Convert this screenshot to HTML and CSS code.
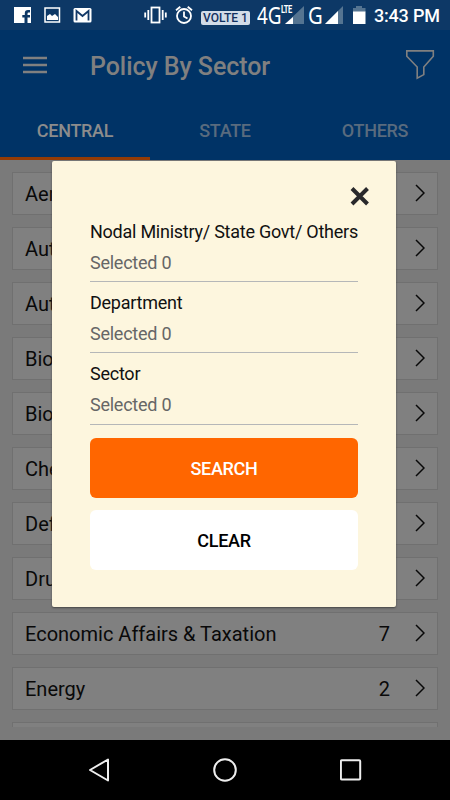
FILE: index.html
```html
<!DOCTYPE html>
<html lang="en">
<head>
<meta charset="utf-8">
<title>Policy By Sector</title>
<link rel="stylesheet" href="styles.css">
</head>
<body>
<div class="screen">
  <header class="status">
    <svg class="notices" width="80" height="30" viewBox="0 0 80 30">
      <path fill="#fff" fill-rule="evenodd" d="M1 7h17v16h-3.500v-5.500h2.500v-2.500h-2.500v-1.300q0-1.200 1.200-1.200h1.300V10h-2q-3.200 0-3.200 3.200V15H9.300v2.500h2.200V23H1z"/>
      <path fill="none" stroke="#fff" stroke-width="1.500" d="M32 8h14.500v14H32z"/>
      <path fill="#fff" d="M34 20v-4l3-2 2 2 3-2 3 3v3z"/>
      <rect x="60.500" y="8" width="18" height="14.500" rx="1.500" fill="#fff"/>
      <path fill="none" stroke="#123968" stroke-width="1.800" d="M63.500 20.500v-9.500l6 5 6-5v9.500"/>
    </svg>
    <svg class="alerts" width="50" height="30" viewBox="0 0 50 30">
      <g fill="none" stroke="#fff" stroke-width="1.800">
        <rect x="7.500" y="7.500" width="8" height="15"/>
        <path d="M4.300 10v10M1.200 12.500v5M18.700 10v10M21.800 12.500v5"/>
        <circle cx="40" cy="16" r="7"/>
        <path d="M40 11.500v5l3.500 2M32 10.300l4.300-3.600M48 10.300l-4.300-3.600"/>
      </g>
    </svg>
    <span class="volte">VOLTE 1</span>
    <span class="net">4G</span>
    <span class="lte">LTE</span>
    <svg class="signal-one" width="19" height="30" viewBox="0 0 19 30"><path fill="#557491" d="M0 24L19 6v18z"/><path fill="#fff" d="M0 24l8-7v7z"/></svg>
    <span class="net edge">G</span>
    <svg class="signal-two" width="18" height="30" viewBox="0 0 18 30"><path fill="#557491" d="M0 24L18 6v18z"/><path fill="#fff" d="M0 24L13 11v13z"/></svg>
    <svg class="battery" width="13" height="30" viewBox="0 0 13 30"><path fill="#557491" d="M0 8h3V6h6v2h3.500v4H0z"/><path fill="#fff" d="M0 11.500h12.500V24H0z"/></svg>
    <span class="clock">3:43 PM</span>
  </header>
  <div class="appbar">
    <svg width="24" height="18" viewBox="0 0 24 18"><path stroke="#808080" stroke-width="2.400" d="M0 2h24M0 9h24M0 16h24"/></svg>
    <h1>Policy By Sector</h1>
    <svg class="filter" width="30" height="32" viewBox="0 0 30 32"><path fill="none" stroke="#808080" stroke-width="1.600" d="M1.800 1.900h26.500v5.400L18.800 18v7.600l-6.600 3.600V18L1.800 7.300z"/></svg>
  </div>
  <nav class="tabs"><span class="active">CENTRAL</span><span>STATE</span><span>OTHERS</span></nav>
  <main class="list">
    <div class="row"><b>Aer</b><i></i><svg width="10" height="18" viewBox="0 0 10 18"><path d="M1 1l8 8-8 8"/></svg></div>
    <div class="row"><b>Aut</b><i></i><svg width="10" height="18" viewBox="0 0 10 18"><path d="M1 1l8 8-8 8"/></svg></div>
    <div class="row"><b>Aut</b><i></i><svg width="10" height="18" viewBox="0 0 10 18"><path d="M1 1l8 8-8 8"/></svg></div>
    <div class="row"><b>Bio</b><i></i><svg width="10" height="18" viewBox="0 0 10 18"><path d="M1 1l8 8-8 8"/></svg></div>
    <div class="row"><b>Bio</b><i></i><svg width="10" height="18" viewBox="0 0 10 18"><path d="M1 1l8 8-8 8"/></svg></div>
    <div class="row"><b>Che</b><i></i><svg width="10" height="18" viewBox="0 0 10 18"><path d="M1 1l8 8-8 8"/></svg></div>
    <div class="row"><b>Def</b><i></i><svg width="10" height="18" viewBox="0 0 10 18"><path d="M1 1l8 8-8 8"/></svg></div>
    <div class="row"><b>Dru</b><i></i><svg width="10" height="18" viewBox="0 0 10 18"><path d="M1 1l8 8-8 8"/></svg></div>
    <div class="row"><b>Economic Affairs &amp; Taxation</b><i>7</i><svg width="10" height="18" viewBox="0 0 10 18"><path d="M1 1l8 8-8 8"/></svg></div>
    <div class="row"><b>Energy</b><i>2</i><svg width="10" height="18" viewBox="0 0 10 18"><path d="M1 1l8 8-8 8"/></svg></div>
    <div class="row"></div>
  </main>
  <footer class="navbar">
    <svg width="22" height="26" viewBox="0 0 22 26"><path d="M20 2.500v21L2 13z"/></svg>
    <svg width="26" height="26" viewBox="0 0 26 26"><circle cx="13" cy="13" r="10.800"/></svg>
    <svg width="22" height="22" viewBox="0 0 22 22"><rect x="0.900" y="1.200" width="19.300" height="19.300" rx="1"/></svg>
  </footer>
  <section class="dialog">
    <svg class="close" width="20" height="20" viewBox="0 0 20 20"><path d="M2 2.500l15.500 15.500M17.500 2.500L2 18"/></svg>
    <div class="field"><label>Nodal Ministry/ State Govt/ Others</label><span>Selected 0</span></div>
    <div class="field"><label>Department</label><span>Selected 0</span></div>
    <div class="field"><label>Sector</label><span>Selected 0</span></div>
    <button class="search">SEARCH</button>
    <button class="clear">CLEAR</button>
  </section>
</div>
</body>
</html>
```
FILE: styles.css
```css
* { box-sizing: border-box; }
body { margin: 0; font-family: Roboto, sans-serif; }
svg { display: block; flex: none; }
.screen { position: relative; width: 450px; height: 800px; overflow: hidden; display: flex; flex-direction: column; background: #7a7a7a; }
.status { height: 30px; flex: none; display: flex; align-items: center; background: #0d3866; color: #fff; white-space: nowrap; }
.notices { margin-left: 13px; }
.alerts { margin-left: 51px; }
.volte { width: 49px; height: 14px; margin: 6px 0 0 7px; border-radius: 2px; background: #d3dce8; color: #123060; font-size: 12px; font-weight: 500; line-height: 15px; text-align: center; }
.net { width: 24px; margin-left: 7px; font: 23px/30px "Noto Sans", sans-serif; }
.net:not(.edge) { transform: scaleX(.82); transform-origin: left; }
.lte { width: 12px; height: 22px; font-size: 10px; font-weight: 700; line-height: 12px; letter-spacing: -.6px; transform: scaleX(.75); transform-origin: left; }
.signal-one { margin-left: -8px; }
.edge { width: 16px; margin-left: 4px; transform: scaleX(.88); transform-origin: left; }
.signal-two { margin-left: 1px; }
.battery { margin-left: 10px; }
.clock { margin: 1px 0 0 8px; font-size: 18px; font-weight: 500; letter-spacing: -.2px; }
.appbar { height: 70px; flex: none; display: flex; align-items: center; padding: 0 15px 0 23px; background: #036; color: #808080; }
.appbar h1 { margin: 3px auto 0 43px; font-size: 25px; font-weight: 500; letter-spacing: -.06px; }
.tabs { height: 60px; flex: none; display: grid; grid-template-columns: repeat(3, 1fr); grid-template-rows: 60px; background: #036; color: #596b7e; font-size: 18px; font-weight: 500; line-height: 61px; letter-spacing: -.3px; text-align: center; }
.tabs .active { color: #8c8c8c; border-bottom: 3px solid #933b05; }
.list { height: 567px; flex: none; overflow: hidden; padding: 12px 12px 0; display: flex; flex-direction: column; gap: 12px; }
.row { height: 43px; flex: none; display: flex; align-items: center; padding: 0 12px; border: 1px solid #707070; background: #808080; color: #090909; font-size: 20px; }
.row b, .row i { font-weight: 400; font-style: normal; }
.row b { flex: 1; padding-top: 1px; }
.row i { margin-right: 25px; padding-top: 1px; }
.row svg { margin-bottom: 1px; fill: none; stroke: #080808; stroke-width: 1.5; }
.navbar { height: 60px; margin-top: auto; flex: none; display: flex; align-items: center; justify-content: center; gap: 102px; background: #000; }
.navbar svg { fill: none; stroke: #eee; stroke-width: 2; stroke-linejoin: round; }
.dialog { position: absolute; left: 52px; top: 161px; width: 344px; height: 446px; padding: 25px 38px 0; display: flex; flex-direction: column; border-radius: 2px; background: #fdf6de; box-shadow: 0 1px 2px #444; }
.close { align-self: flex-end; margin-right: -12px; stroke: #29292b; stroke-width: 4; }
.field { height: 71.4px; flex: none; display: flex; flex-direction: column; border-bottom: 1px solid #b5b7b8; white-space: nowrap; letter-spacing: -.25px; }
.close + .field { height: 76px; padding-top: 5px; }
.field label { padding-top: 10px; font-size: 18px; line-height: 22px; color: #111; }
.field span { padding-top: 9px; font-size: 18px; line-height: 21px; color: #666; }
button { width: 268px; height: 60px; flex: none; padding: 0; border: 0; border-radius: 6px; font: 500 18px/61px Roboto, sans-serif; letter-spacing: -.3px; }
.search { margin-top: 12.8px; background: #f60; color: #fff; }
.clear { margin-top: 12.6px; background: #fff; color: #000; }
```
